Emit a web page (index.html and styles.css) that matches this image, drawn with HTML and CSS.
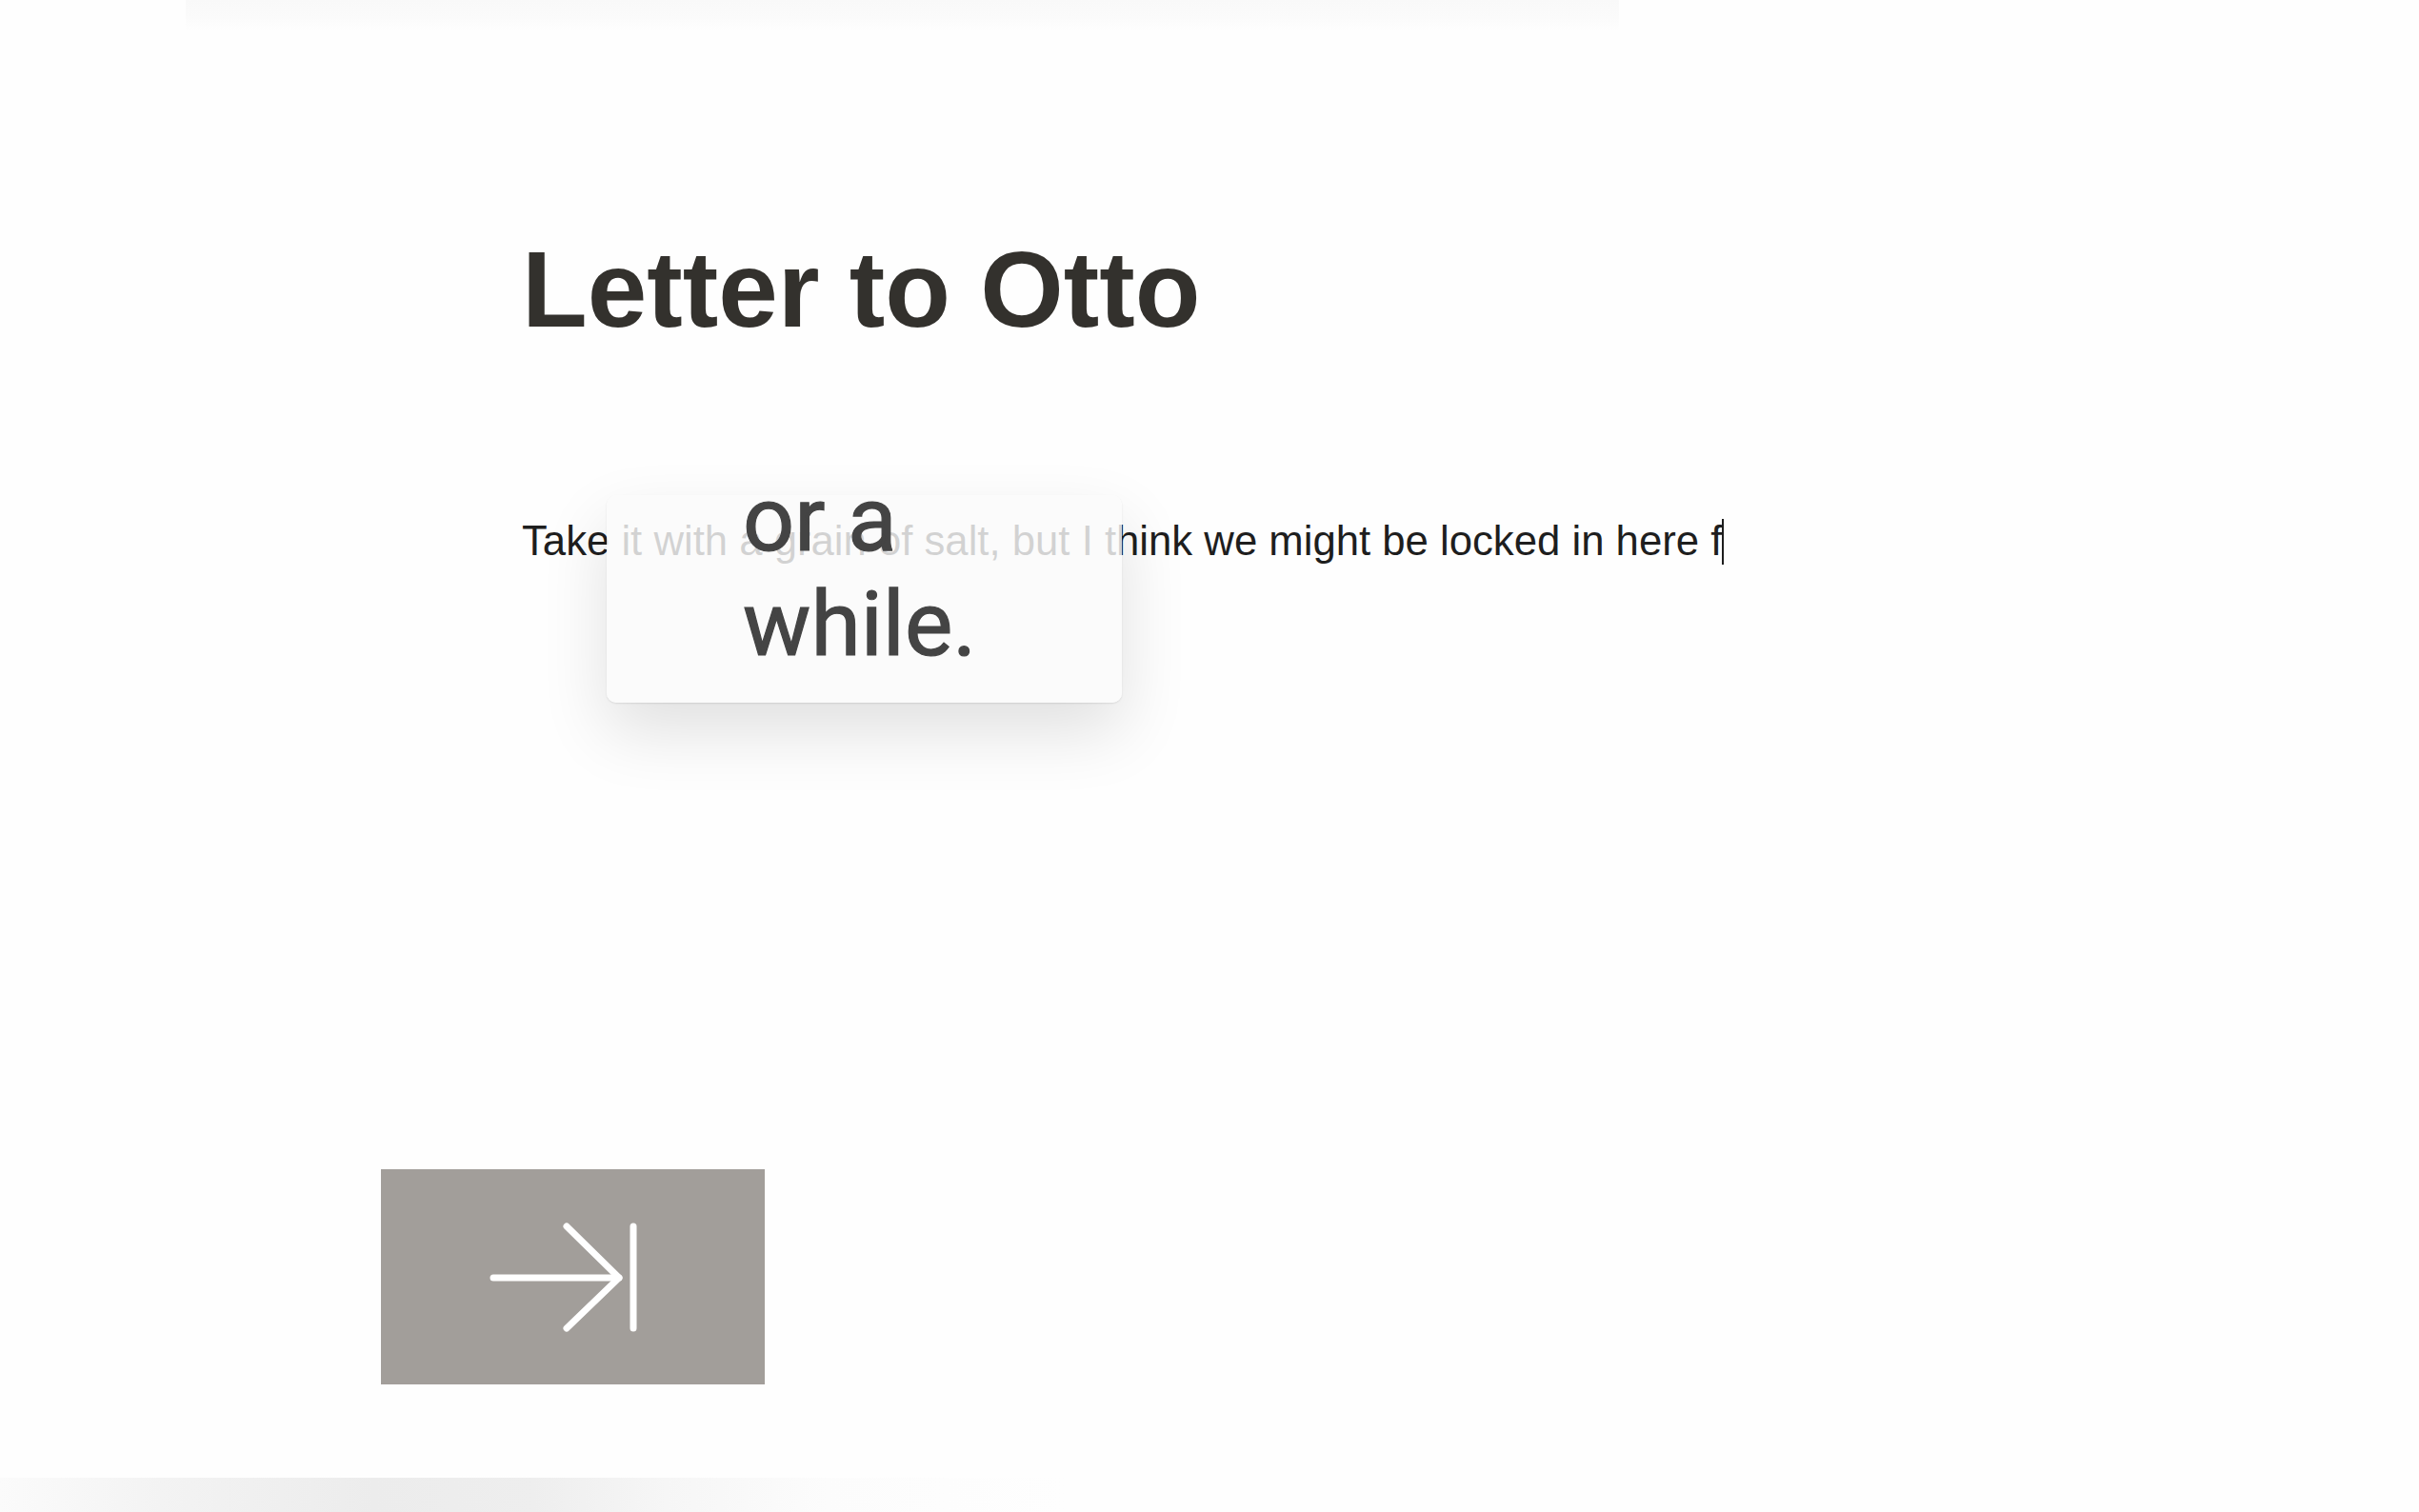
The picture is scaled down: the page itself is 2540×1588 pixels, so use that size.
FILE: index.html
```html
<!DOCTYPE html>
<html lang="en">
<head>
<meta charset="utf-8">
<title>Letter to Otto</title>
<link rel="stylesheet" href="styles.css">
</head>
<body>
<div class="page">
  <div class="top-band"></div>
  <main class="doc">
    <h1 class="doc-title">Letter to Otto</h1>
    <div class="doc-body">
      <p class="doc-line">Take it with a grain of salt, but I think we might be locked in here f<span class="caret"></span></p>
      <div class="suggestion">
        <div class="suggestion-text">or a<br>while.</div>
      </div>
    </div>
  </main>
  <div class="spacer"></div>
  <div class="action-row">
    <button class="tab-button" type="button" aria-label="Accept suggestion">
      <svg class="tab-icon" width="155" height="115" viewBox="0 0 155 115" fill="none" stroke="#ffffff" stroke-width="7" stroke-linecap="round" stroke-linejoin="round">
        <path d="M4 58 H136"/>
        <path d="M81 4 L136 58 L81 111"/>
        <path d="M151 4 V111"/>
      </svg>
    </button>
  </div>
  <div class="bottom-band"></div>
</div>
</body>
</html>
```
FILE: styles.css
```css
html, body {
  margin: 0;
  padding: 0;
  background: #fefefe;
}

.page {
  height: 100vh;
  display: flex;
  flex-direction: column;
  overflow: hidden;
}

.top-band {
  height: 32px;
  margin-left: 195px;
  width: 1505px;
  flex: none;
  background: linear-gradient(180deg, #f9f9f9 0%, #fbfbfb 60%, #fefefe 100%);
}

.doc {
  padding-left: 548px;
  flex: none;
}

.doc-title {
  margin: 205px 0 0 0;
  font-family: "Liberation Sans", Arial, sans-serif;
  font-weight: 700;
  font-size: 112.5px;
  line-height: 134px;
  color: #33312d;
}

.doc-body {
  position: relative;
  margin-top: 164px;
}

.doc-line {
  margin: 0;
  font-family: "Liberation Sans", Arial, sans-serif;
  font-size: 43.7px;
  line-height: 65px;
  color: #1e1e1e;
}

.caret {
  display: inline-block;
  width: 2px;
  height: 48px;
  background: #1e1e1e;
  vertical-align: -10px;
}

.suggestion {
  position: absolute;
  left: 89px;
  top: -15px;
  width: 541px;
  height: 218px;
  box-sizing: border-box;
  padding-left: 143px;
  border-radius: 10px;
  background: rgba(250, 250, 250, 0.82);
  box-shadow: 0 1px 2px rgba(0, 0, 0, 0.10), 0 30px 70px rgba(0, 0, 0, 0.12);
}

.suggestion-text {
  margin-top: -29px;
  font-family: Roboto, "Noto Sans", sans-serif;
  font-weight: 400;
  font-size: 95px;
  line-height: 110px;
  color: #444444;
  -webkit-text-stroke: 1.2px #444444;
}

.spacer {
  flex: 1;
}

.action-row {
  flex: none;
  padding-left: 400px;
  margin-bottom: 98px;
}

.tab-button {
  width: 403px;
  height: 226px;
  border: none;
  margin: 0;
  padding: 0;
  background: #a29e9a;
  display: flex;
  align-items: center;
  justify-content: center;
  cursor: pointer;
}

.tab-icon {
  margin-right: 20px;
}

.bottom-band {
  flex: none;
  height: 36px;
  width: 1400px;
  background: linear-gradient(90deg, #fbfbfb 0%, #f3f3f3 12%, #ececec 28%, #eeeeee 40%, #f6f6f6 50%, #fcfcfc 62%, #fefefe 80%);
}
```
